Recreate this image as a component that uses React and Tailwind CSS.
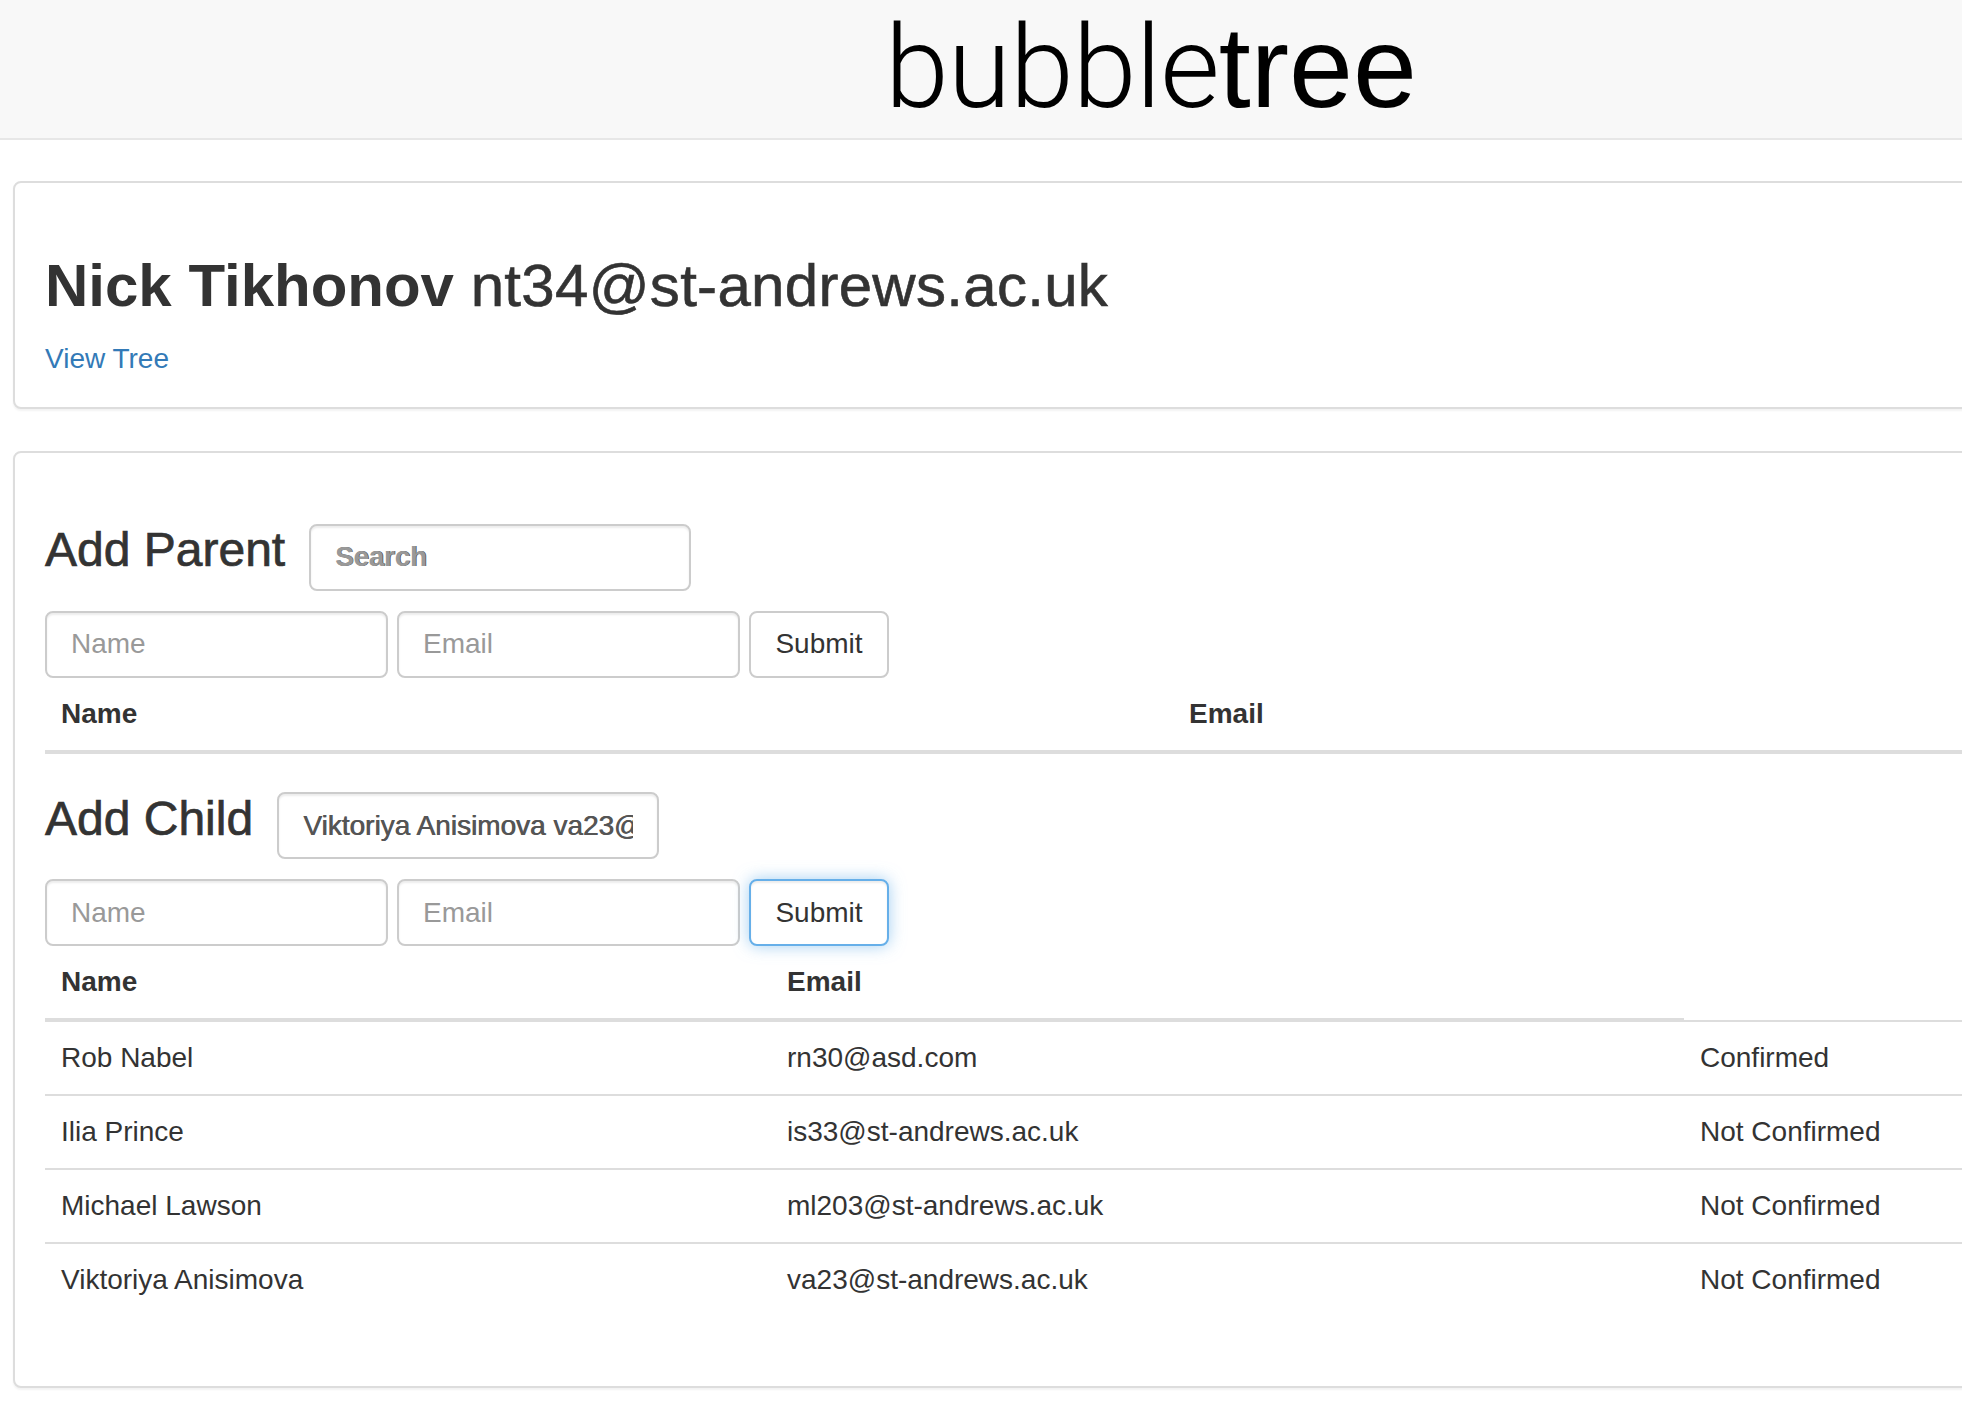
import React from "react";

const inputBase =
  "h-[67px] rounded-[8px] border-2 border-[#ccc] bg-white px-[24px] text-[28px] text-[#555] placeholder:text-[#999] shadow-[inset_0_2px_2px_rgba(0,0,0,0.075)] outline-none font-['Liberation_Sans',Arial,sans-serif]";

function AddRow({ focused }) {
  return (
    <form className="flex gap-[9px]" onSubmit={(e) => e.preventDefault()}>
      <input className={inputBase + " w-[343px]"} placeholder="Name" />
      <input className={inputBase + " w-[343px]"} placeholder="Email" />
      <button
        type="submit"
        className={
          focused
            ? "h-[67px] w-[140px] rounded-[8px] border-2 border-[#66afe9] bg-white text-[28px] text-[#333] shadow-[inset_0_2px_2px_rgba(0,0,0,0.075),0_0_16px_rgba(102,175,233,0.6)]"
            : "h-[67px] w-[140px] rounded-[8px] border-2 border-[#ccc] bg-white text-[28px] text-[#333]"
        }
      >
        Submit
      </button>
    </form>
  );
}

function Heading({ title, value, placeholder, mt }) {
  return (
    <h3
      className={
        "flex items-baseline gap-[24px] mb-[20px] text-[48px] leading-[53px] " + mt
      }
    >
      <span className="[-webkit-text-stroke:0.7px_#333]">{title}</span>
      <input
        className={
          inputBase +
          " w-[382px] text-[#555] [text-shadow:0.7px_0_0_#555] placeholder:font-bold placeholder:tracking-[-0.3px]"
        }
        placeholder={placeholder}
        defaultValue={value}
      />
    </h3>
  );
}

export default function App() {
  const children = [
    ["Rob Nabel", "rn30@asd.com", "Confirmed"],
    ["Ilia Prince", "is33@st-andrews.ac.uk", "Not Confirmed"],
    ["Michael Lawson", "ml203@st-andrews.ac.uk", "Not Confirmed"],
    ["Viktoriya Anisimova", "va23@st-andrews.ac.uk", "Not Confirmed"],
  ];
  return (
    <div className="w-full min-h-[1422px] overflow-hidden bg-white font-['Liberation_Sans',Arial,sans-serif] text-[28px] leading-[40px] text-[#333]">
      <div className="w-[2346px]">
        <header className="h-[140px] border-b-2 border-[#e7e7e7] bg-[#f8f8f8] mb-[41px]">
          <h1 className="pt-[2px] pr-[44px] text-center text-[115px] leading-[130px] text-black">
            <span className="font-['Roboto'] font-light tracking-[-1px]">bubble</span>
            <span>tree</span>
          </h1>
        </header>

        <div className="mx-[13px] mb-[42px] rounded-[8px] border-2 border-[#ddd] bg-white px-[30px] pt-[30px] pb-[28px] shadow-[0_2px_2px_rgba(0,0,0,0.05)]">
          <h2 className="mt-[40px] mb-[20px] text-[60px] leading-[66px]">
            <span className="font-bold">Nick Tikhonov</span>{" "}
            <span className="[-webkit-text-stroke:0.6px_#333] tracking-[0.3px]">nt34@st-andrews.ac.uk</span>
          </h2>
          <a href="#" className="text-[#337ab7]">
            View Tree
          </a>
        </div>

        <div className="mx-[13px] mb-[40px] rounded-[8px] border-2 border-[#ddd] bg-white px-[30px] pt-[30px] pb-[30px] shadow-[0_2px_2px_rgba(0,0,0,0.05)]">
          <Heading title="Add Parent" placeholder="Search" mt="mt-[40px]" />
          <AddRow />
          <table className="w-full table-fixed border-separate border-spacing-0">
            <thead>
              <tr>
                <th className="border-b-4 border-[#ddd] p-[16px] text-left font-bold leading-[40px]">Name</th>
                <th className="border-b-4 border-[#ddd] p-[16px] text-left font-bold leading-[40px]">Email</th>
              </tr>
            </thead>
            <tbody></tbody>
          </table>

          <Heading
            title="Add Child"
            value="Viktoriya Anisimova va23@st-andrews.ac.uk"
            placeholder="Search"
            mt="mt-[38px]"
          />
          <AddRow focused />
          <table className="mb-[40px] w-full table-fixed border-separate border-spacing-0">
            <colgroup>
              <col className="w-[726px]" />
              <col className="w-[913px]" />
              <col />
            </colgroup>
            <thead>
              <tr>
                <th className="border-b-4 border-[#ddd] p-[16px] text-left font-bold leading-[40px]">Name</th>
                <th className="border-b-4 border-[#ddd] p-[16px] text-left font-bold leading-[40px]">Email</th>
                <th className="border-b-2 border-[#ddd] p-0"></th>
              </tr>
            </thead>
            <tbody>
              {children.map((r, i) => (
                <tr key={r[0]}>
                  {r.map((c, j) => (
                    <td
                      key={j}
                      className={
                        i === 0
                          ? "p-[16px] align-top leading-[40px]"
                          : "border-t-2 border-[#ddd] p-[16px] align-top leading-[40px]"
                      }
                    >
                      {c}
                    </td>
                  ))}
                </tr>
              ))}
            </tbody>
          </table>
        </div>
      </div>
    </div>
  );
}
